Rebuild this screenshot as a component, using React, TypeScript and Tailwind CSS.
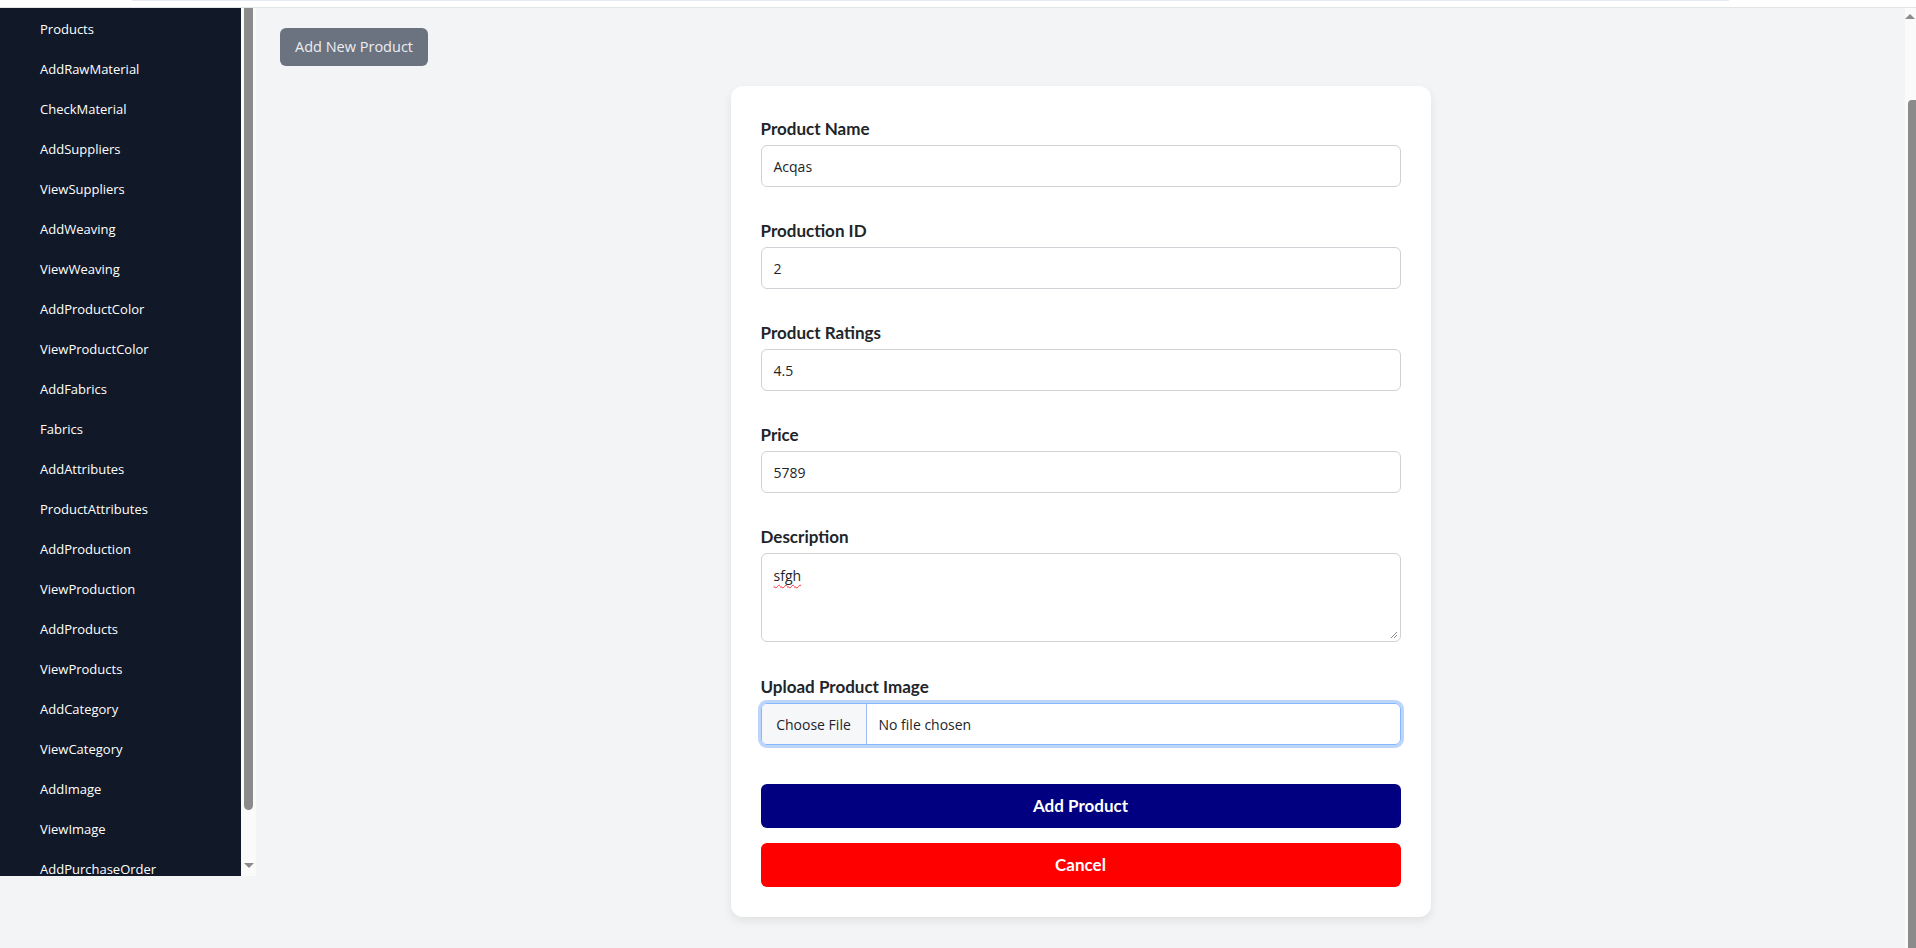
import React from "react";

const NAV_ITEMS = [
  "Products",
  "AddRawMaterial",
  "CheckMaterial",
  "AddSuppliers",
  "ViewSuppliers",
  "AddWeaving",
  "ViewWeaving",
  "AddProductColor",
  "ViewProductColor",
  "AddFabrics",
  "Fabrics",
  "AddAttributes",
  "ProductAttributes",
  "AddProduction",
  "ViewProduction",
  "AddProducts",
  "ViewProducts",
  "AddCategory",
  "ViewCategory",
  "AddImage",
  "ViewImage",
  "AddPurchaseOrder",
];

const FIELDS = [
  { label: "Product Name", value: "Acqas" },
  { label: "Production ID", value: "2" },
  { label: "Product Ratings", value: "4.5" },
  { label: "Price", value: "5789" },
];

// Label used above every form control
const FieldLabel = ({ children }: any) => (
  <label className="block mb-1 leading-6 text-[17px] font-bold text-[#212529] font-['Lato',sans-serif]">
    {children}
  </label>
);

const AddProduct = () => {
  return (
    <div className="w-[1916px] h-[948px] overflow-hidden bg-[#f3f4f6] font-['Open_Sans',sans-serif]">
      {/* Top bar (scrolled away) */}
      <div className="h-[8px] bg-white border-b border-[#e2e4e8]">
        <div className="ml-[132px] w-[1597px] h-px bg-[#e6ebf3]" />
      </div>

      <div className="flex h-[940px]">
        {/* Sidebar with its own scrollbar */}
        <div className="flex h-[868px] w-[256px] shrink-0">
          <div className="w-[241px] bg-[#111827] overflow-hidden pt-[2px]">
            {NAV_ITEMS.map((item) => (
              <div
                key={item}
                className="h-10 flex items-center pl-10 text-[13px] text-white"
              >
                {item}
              </div>
            ))}
          </div>
          <div className="w-[15px] bg-[#fafafa] flex flex-col items-center">
            <div className="w-[9px] h-[802px] bg-[#8b8b8b] rounded-b-[5px]" />
            <div className="mt-auto mb-[8px] w-0 h-0 border-l-[5px] border-r-[5px] border-t-[5px] border-l-transparent border-r-transparent border-t-[#8b8b8b]" />
          </div>
        </div>

        {/* Main content */}
        <div className="flex-1 px-6 pt-5">
          <button className="h-[38px] w-[148px] rounded-md bg-[#6b7280] text-[14.5px] text-[#eceef1]">
            Add New Product
          </button>

          <div className="mx-auto mt-5 w-[700px] rounded-xl bg-white px-[30px] pt-[31px] pb-[30px] shadow-[0_4px_10px_rgba(0,0,0,0.08)]">
            {FIELDS.map((f) => (
              <div key={f.label} className="mb-8">
                <FieldLabel>{f.label}</FieldLabel>
                <div className="h-[42px] flex items-center rounded-md border border-[#cfd2d6] px-[12px] text-[14px] text-[#212529]">
                  {f.value}
                </div>
              </div>
            ))}

            <div className="mb-[33px]">
              <FieldLabel>Description</FieldLabel>
              <div className="relative h-[89px] rounded-md border border-[#cfd2d6] px-[12px] pt-[11px] text-[14px] text-[#212529]">
                <span className="underline decoration-wavy decoration-red-500 decoration-1 underline-offset-[3px]">
                  sfgh
                </span>
                <svg
                  className="absolute right-[2px] bottom-[2px]"
                  width="8"
                  height="8"
                  viewBox="0 0 8 8"
                >
                  <path d="M7 1 L1 7 M7 4 L4 7" stroke="#8a8a8a" strokeWidth="1" />
                </svg>
              </div>
            </div>

            <div>
              <FieldLabel>Upload Product Image</FieldLabel>
              <div className="h-[42px] flex items-stretch overflow-hidden rounded-md border border-[#86b7fe] ring-[3px] ring-[#bcd6fb] text-[14px] text-[#212529]">
                <span className="w-[105px] shrink-0 flex items-center justify-center bg-[#f6f7f9] border-r border-[#9cbdf0]">
                  Choose File
                </span>
                <span className="flex items-center pl-[12px]">No file chosen</span>
              </div>
            </div>

            <button className="mt-[39px] h-[44px] w-full rounded-md bg-[#000080] text-[17px] font-bold text-white font-['Lato',sans-serif]">
              Add Product
            </button>
            <button className="mt-[15px] h-[44px] w-full rounded-md bg-[#ff0000] text-[17px] font-bold text-white font-['Lato',sans-serif]">
              Cancel
            </button>
          </div>
        </div>

        {/* Page scrollbar */}
        <div className="w-[11px] shrink-0 bg-[#fafafa] flex flex-col items-end">
          <div className="mt-[6px] mr-px w-0 h-0 border-l-[5px] border-r-[5px] border-b-[5px] border-l-transparent border-r-transparent border-b-[#8b8b8b]" />
          <div className="mt-[81px] w-[8px] flex-1 bg-[#8b8b8b] rounded-tl-[4px]" />
        </div>
      </div>
    </div>
  );
};

export default function App() {
  return <AddProduct />;
}
